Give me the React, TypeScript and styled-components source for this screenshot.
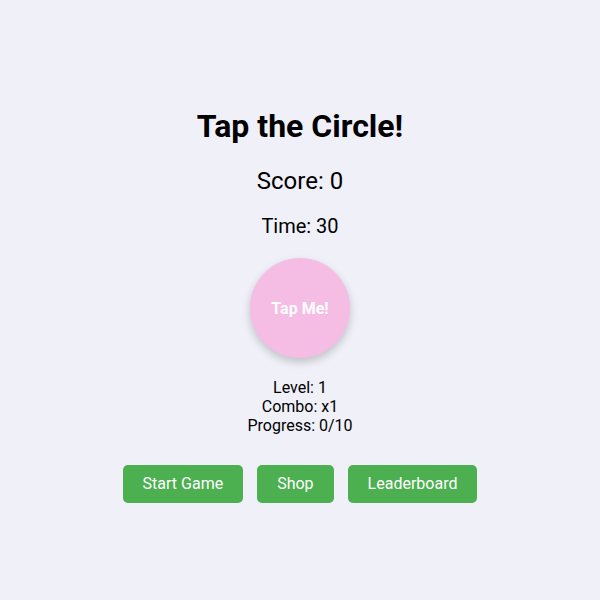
import React from "react";
import styled, { createGlobalStyle } from "styled-components";

const Global = createGlobalStyle`
  html, body { margin: 0; padding: 0; }
  body {
    background: #f0f0f8;
    font-family: Roboto, "Liberation Sans", sans-serif;
    color: #000;
  }
`;

const Page = styled.div`
  min-height: 600px;
  box-sizing: border-box;
  padding-top: 108px;
  display: flex;
  flex-direction: column;
  align-items: center;
  gap: 20px;
`;

const Title = styled.h1`
  margin: 0 0 1px;
  font-size: 32px;
  font-weight: 700;
  line-height: 37.5px;
`;

const Stat = styled.div<{ $size: number }>`
  font-size: ${(p) => p.$size}px;
  line-height: 1.172;
`;

const Circle = styled.button`
  width: 100px;
  height: 100px;
  border-radius: 50%;
  border: none;
  background: #f5bde4;
  color: #fff;
  font-family: inherit;
  font-size: 16px;
  font-weight: 700;
  box-shadow: 0 4px 8px rgba(0, 0, 0, 0.2);
  cursor: pointer;
  padding: 0;
`;

const Info = styled.div`
  display: flex;
  flex-direction: column;
  align-items: center;
  font-size: 16px;
  line-height: 19px;
`;

const Buttons = styled.div`
  display: flex;
  gap: 14px;
  margin-top: 10px;
`;

const Button = styled.button`
  background: #4caf50;
  color: #fff;
  border: none;
  border-radius: 5px;
  padding: 10px 20px;
  font-family: inherit;
  font-size: 16px;
  line-height: 18px;
  cursor: pointer;
`;

export default function App() {
  return (
    <>
      <Global />
      <Page>
        <Title>Tap the Circle!</Title>
        <Stat $size={24}>Score: 0</Stat>
        <Stat $size={20}>Time: 30</Stat>
        <Circle>Tap Me!</Circle>
        <Info>
          <div>Level: 1</div>
          <div>Combo: x1</div>
          <div>Progress: 0/10</div>
        </Info>
        <Buttons>
          <Button>Start Game</Button>
          <Button>Shop</Button>
          <Button>Leaderboard</Button>
        </Buttons>
      </Page>
    </>
  );
}
